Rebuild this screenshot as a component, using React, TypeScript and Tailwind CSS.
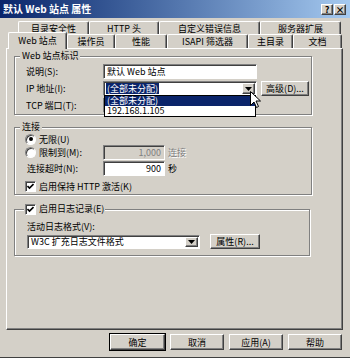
import React from 'react'

const raised =
  'bg-[#d4d0c8] border border-t-white border-l-white border-r-[#404040] border-b-[#404040] shadow-[inset_-1px_-1px_0_#808080]'
const sunken =
  'border border-t-[#808080] border-l-[#808080] border-r-white border-b-white shadow-[inset_1px_1px_0_#404040]'
const groupBox =
  'border border-[#808080] shadow-[inset_1px_1px_0_#fff,1px_1px_0_#fff]'

function Btn({ children, className = '' }: { children: React.ReactNode; className?: string }) {
  return (
    <div className={`${raised} flex items-center justify-center text-black ${className}`}>
      {children}
    </div>
  )
}

function Arrow() {
  return (
    <div className={`${raised} w-[13px] h-full flex items-center justify-center shrink-0`}>
      <svg width="7" height="4" viewBox="0 0 7 4">
        <path d="M0 0h7L3.5 4z" fill="#000" />
      </svg>
    </div>
  )
}

function Radio({ checked }: { checked?: boolean }) {
  return (
    <div className="w-[11px] h-[11px] rounded-full bg-white border border-t-[#808080] border-l-[#808080] border-r-white border-b-white shadow-[inset_1px_1px_0_#404040] flex items-center justify-center shrink-0">
      {checked && <div className="w-[4px] h-[4px] rounded-full bg-black" />}
    </div>
  )
}

function Check() {
  return (
    <div className={`${sunken} w-[11px] h-[11px] bg-white flex items-center justify-center shrink-0`}>
      <svg width="7" height="7" viewBox="0 0 7 7">
        <path d="M0.5 3l2 2 4-4" fill="none" stroke="#000" strokeWidth="1.6" />
      </svg>
    </div>
  )
}

function Tab({ label, w, active }: { label: string; w: string; active?: boolean }) {
  return (
    <div
      className={`${w} ${
        active ? 'h-[17px] relative z-10 -mb-px pb-[2px]' : 'h-[14px]'
      } bg-[#d4d0c8] border-t border-l border-r border-t-white border-l-white border-r-[#404040] rounded-t-[2px] shadow-[inset_-1px_0_0_#808080] flex items-center justify-center`}
    >
      {label}
    </div>
  )
}

export default function App() {
  return (
    <div className="w-[350px] h-[358px] bg-[#d4d0c8] flex flex-col relative overflow-hidden text-[9px] leading-none text-black font-[family-name:'Noto_Sans_CJK_SC','Liberation_Sans',sans-serif] border-b border-b-[#404040]">
      {/* title bar */}
      <div className="h-[18px] bg-gradient-to-r from-[#0a246a] to-[#a6caf0] flex items-center pl-[3px] pr-[4px]">
        <span className="text-white font-bold text-[10px]">默认 Web 站点 属性</span>
        <div className="ml-auto flex gap-[1px]">
          <Btn className="w-[12px] h-[11px] font-bold text-[9px]">?</Btn>
          <Btn className="w-[12px] h-[11px] font-bold text-[9px]">×</Btn>
        </div>
      </div>

      {/* tabs */}
      <div className="mt-[3px] flex pl-[18px]">
        <Tab label="目录安全性" w="w-[71px]" />
        <Tab label="HTTP 头" w="w-[70px]" />
        <Tab label="自定义错误信息" w="w-[101px]" />
        <Tab label="服务器扩展" w="w-[81px]" />
      </div>
      <div className="flex items-end pl-[8px] -mt-[3px]">
        <Tab label="Web 站点" w="w-[59px]" active />
        <Tab label="操作员" w="w-[48px]" />
        <Tab label="性能" w="w-[52px]" />
        <Tab label="ISAPI 筛选器" w="w-[81px]" />
        <Tab label="主目录" w="w-[45px]" />
        <Tab label="文档" w="w-[49px]" />
      </div>

      {/* panel */}
      <div className={`${raised} ml-[6px] w-[337px] h-[282px] pl-[7px] pt-px flex flex-col`}>
        {/* Web 站点标识 */}
        <fieldset className={`${groupBox} w-[298px] pb-[1px]`}>
          <legend className="ml-[5px] px-[2px] bg-[#d4d0c8] leading-[12px]">Web 站点标识</legend>
          <div className="flex flex-col gap-[2px] pt-[2px] pl-[11px]">
            <div className="flex items-center h-[15px]">
              <span className="w-[77px]">说明(S):</span>
              <div className={`${sunken} w-[154px] h-full bg-white flex items-center pl-[3px]`}>
                默认 Web 站点
              </div>
            </div>
            <div className="flex items-center h-[15px]">
              <span className="w-[77px]">IP 地址(I):</span>
              <div className={`${sunken} w-[154px] h-full bg-white flex items-center relative z-20 p-px`}>
                <div className="flex-1 flex items-center pl-[1px]">
                  <span className="bg-[#0a246a] text-white px-[1px] h-[11px] flex items-center">(全部未分配)</span>
                </div>
                <Arrow />
                {/* open list */}
                <div className="absolute left-0 top-full w-full bg-white border border-black flex flex-col">
                  <div className="h-[10px] bg-[#0a246a] text-white flex items-center pl-[2px] leading-[10px]">(全部未分配)</div>
                  <div className="h-[10px] flex items-center pl-[2px] leading-[10px]">192.168.1.105</div>
                </div>
              </div>
              <Btn className="ml-[4px] w-[48px] h-[15px]">高级(D)...</Btn>
            </div>
            <div className="flex items-center h-[15px]">
              <span className="w-[77px]">TCP 端口(T):</span>
              <div className={`${sunken} w-[62px] h-full bg-white`} />
            </div>
          </div>
        </fieldset>

        {/* 连接 */}
        <fieldset className={`${groupBox} w-[298px] mt-[6px] pb-[2px]`}>
          <legend className="ml-[5px] px-[2px] bg-[#d4d0c8] leading-[12px]">连接</legend>
          <div className="flex flex-col pl-[10px]">
            <div className="flex items-center h-[12px] gap-[3px]">
              <Radio checked />
              <span>无限(U)</span>
            </div>
            <div className="flex items-center h-[15px]">
              <div className="w-[78px] flex items-center gap-[3px]">
                <Radio />
                <span>限制到(M):</span>
              </div>
              <div className={`${sunken} w-[62px] h-full bg-[#d4d0c8] flex items-center justify-end pr-[3px] text-[#808080]`}>
                1,000
              </div>
              <span className="ml-[3px] text-[#808080] [text-shadow:1px_1px_0_#fff]">连接</span>
            </div>
            <div className="flex items-center h-[15px] mt-px">
              <span className="w-[78px] pl-[2px]">连接超时(N):</span>
              <div className={`${sunken} w-[62px] h-full bg-white flex items-center justify-end pr-[3px]`}>900</div>
              <span className="ml-[3px]">秒</span>
            </div>
            <div className="flex items-center h-[12px] mt-[4px] gap-[3px]">
              <Check />
              <span>启用保持 HTTP 激活(K)</span>
            </div>
          </div>
        </fieldset>

        {/* 日志 */}
        <fieldset className={`${groupBox} w-[296px] mt-[8px] pb-[6px]`}>
          <legend className="ml-[9px] px-[1px] bg-[#d4d0c8] leading-[12px] flex items-center gap-[3px] h-[12px]">
            <Check />
            <span>启用日志记录(E)</span>
          </legend>
          <div className="flex flex-col pl-[12px]">
            <span className="mt-[5px] h-[12px] flex items-center">活动日志格式(V):</span>
            <div className="flex items-center mt-[2px] h-[15px]">
              <div className={`${sunken} w-[173px] h-[14px] bg-white flex items-center p-px`}>
                <span className="flex-1 pl-[2px]">W3C 扩充日志文件格式</span>
                <Arrow />
              </div>
              <Btn className="ml-[10px] w-[50px] h-[15px]">属性(R)...</Btn>
            </div>
          </div>
        </fieldset>
      </div>

      {/* dialog buttons */}
      <div className="mt-[4px] flex justify-end gap-[5px] pr-[8px]">
        <Btn className="w-[55px] h-[16px] outline outline-1 outline-black">确定</Btn>
        <Btn className="w-[54px] h-[16px]">取消</Btn>
        <Btn className="w-[54px] h-[16px]">应用(A)</Btn>
        <Btn className="w-[54px] h-[16px]">帮助</Btn>
      </div>

      {/* mouse pointer */}
      <svg className="absolute left-[250px] top-[91px] z-30" width="11" height="17" viewBox="0 0 11 17">
        <path d="M0.5 0.5v14l3.5-3.5 2.5 5.5 2-1-2.5-5.5h4.5z" fill="#fff" stroke="#000" strokeWidth="1" />
      </svg>
    </div>
  )
}
